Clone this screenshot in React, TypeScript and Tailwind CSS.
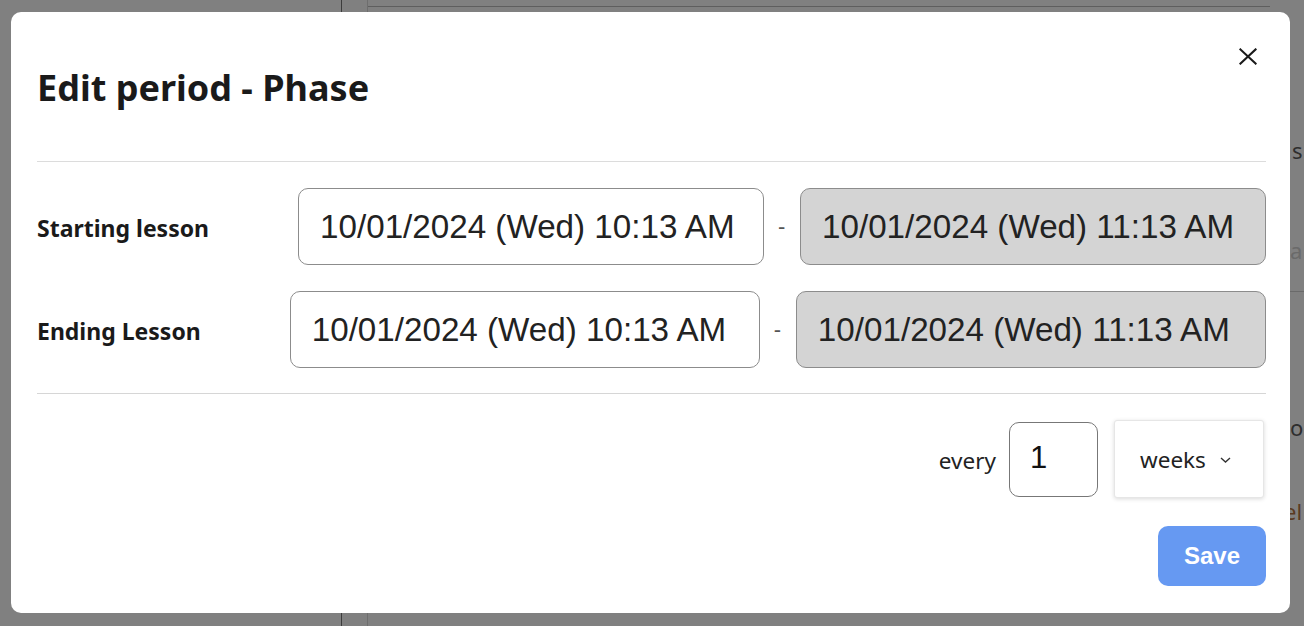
import React from "react";

const ui = { fontFamily: '"Noto Sans", "Open Sans", sans-serif' };
const arial = { fontFamily: '"Liberation Sans", Arial, sans-serif' };

function DateBox({ value, disabled }: { value: string; disabled?: boolean }) {
  return (
    <div
      className={`flex h-[77px] flex-1 items-center rounded-[10px] border pl-[21px] text-[33.2px] text-[#222] ${
        disabled ? "border-[#8c8c8c] bg-[#d4d4d4]" : "border-[#8c8c8c] bg-white"
      }`}
      style={arial}
    >
      {value}
    </div>
  );
}

function Row({ label }: { label: string }) {
  return (
    <div className="flex items-center">
      <div className="mr-[89px] pt-[3px] text-[23px] font-bold text-[#1a1a1a]" style={ui}>
        {label}
      </div>
      <div className="flex flex-1 items-center gap-[14px]">
        <DateBox value="10/01/2024 (Wed) 10:13 AM" />
        <span className="w-[8px] text-[22px] text-[#555]" style={arial}>
          -
        </span>
        <DateBox value="10/01/2024 (Wed) 11:13 AM" disabled />
      </div>
    </div>
  );
}

export default function App() {
  return (
    <div className="relative h-[626px] w-[1304px] overflow-hidden bg-[#808080]">
      {/* underlying page, dimmed */}
      <div className="flex h-full">
        <div className="w-[342px] border-r border-[#3c3c3c]" />
        <div className="ml-[25px] flex flex-1 border-l border-[#6e6e6e]">
          <div className="flex-1 pt-[6px]">
            <div className="border-t border-[#5e5e5e]" />
          </div>
          <div className="flex w-[34px] flex-col text-[22px] leading-none" style={ui}>
            <div className="mt-[139px] pl-[22px] text-[#2e2e2e]">s</div>
            <div className="mt-[78px] pl-[20px] text-[#6a6a6a]">a</div>
            <div className="mt-[30px] border-t border-[#6a6a6a]" />
            <div className="mt-[124px] pl-[20px] text-[#2e2e2e]">o</div>
            <div className="mt-[62px] pl-[14px] text-[#5a3a22]">el</div>
          </div>
        </div>
      </div>

      {/* modal */}
      <div className="absolute left-[11px] top-[12px] flex h-[601px] w-[1279px] flex-col rounded-[10px] bg-white pl-[26px] pr-[24px]">
        <div className="flex h-[150px] items-start justify-between border-b border-[#dcdcdc]">
          <h1 className="pt-[54px] text-[36px] font-bold leading-[44px] text-[#1a1a1a]" style={ui}>
            Edit period - Phase
          </h1>
          <button className="mr-[9px] mt-[35px] flex h-[18px] w-[18px] items-center justify-center">
            <svg width="19" height="17" viewBox="0 0 19 17" fill="none">
              <path d="M1.5 1 L17.5 16 M17.5 1 L1.5 16" stroke="#1a1a1a" strokeWidth="2.2" strokeLinecap="square" />
            </svg>
          </button>
        </div>

        <div className="flex flex-col gap-[26px] border-b border-[#d6d6d6] pb-[25px] pt-[26px]">
          <Row label="Starting lesson" />
          <Row label="Ending Lesson" />
        </div>

        <div className="mt-[26px] flex items-center justify-end">
          <span className="mr-[13px] pt-[4px] text-[22.5px] text-[#222]" style={ui}>
            every
          </span>
          <div
            className="flex h-[75px] w-[89px] items-center rounded-[10px] border border-[#777] pb-[2px] pl-[20px] text-[31px] text-[#111]"
            style={arial}
          >
            1
          </div>
          <div className="ml-[16px] mr-[2px] flex h-[78px] w-[150px] items-center rounded-[3px] border border-[#e6e6e6] bg-white pl-[25px] pt-[2px] shadow-[0_1px_4px_rgba(0,0,0,0.15)]">
            <span className="text-[22.5px] text-[#222]" style={ui}>
              weeks
            </span>
            <svg className="ml-[13px]" width="13" height="8" viewBox="0 0 13 8" fill="none">
              <path d="M2 2 L6.5 6 L11 2" stroke="#333" strokeWidth="1.4" />
            </svg>
          </div>
        </div>

        <div className="mt-[28px] flex justify-end">
          <button
            className="flex h-[60px] w-[108px] items-center justify-center rounded-[10px] bg-[#6699f2] text-[24px] font-bold text-white"
            style={arial}
          >
            Save
          </button>
        </div>
      </div>
    </div>
  );
}
